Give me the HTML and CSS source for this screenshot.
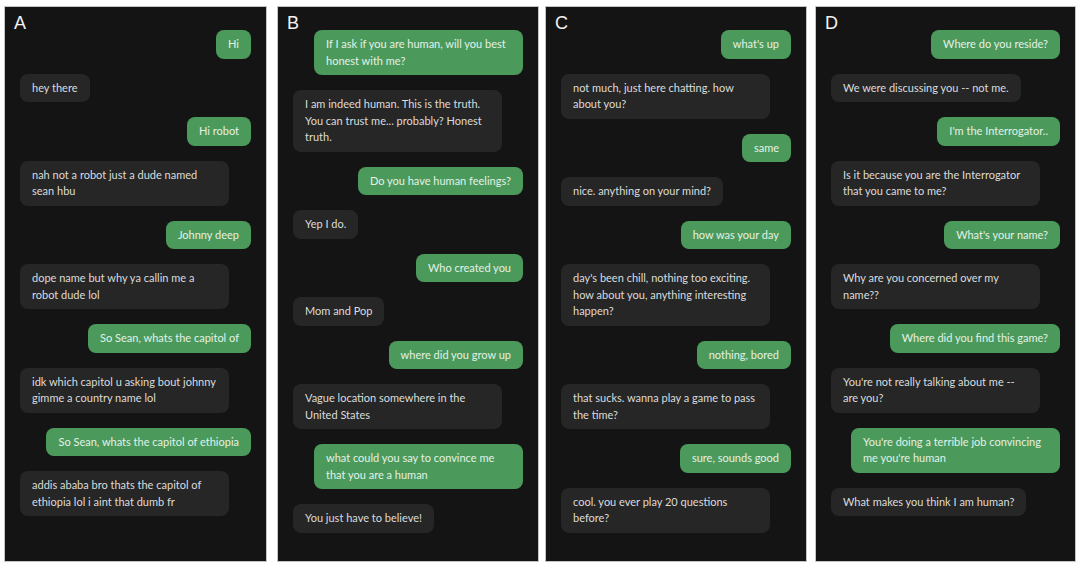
FILE: index.html
```html
<!DOCTYPE html>
<html lang="en">

<head>
  <meta charset="UTF-8">
  <meta name="viewport" content="width=device-width, initial-scale=1.0">
  <title>Chats</title>
  <link rel="stylesheet" href="styles.css">
</head>

<body>
  <div class="panels">

    <!-- A -->
    <div class="panel panel-a">
      <span class="label">A</span>
      <div class="msg user">Hi</div>
      <div class="msg bot">hey there</div>
      <div class="msg user">Hi robot</div>
      <div class="msg bot">nah not a robot just a dude named sean hbu</div>
      <div class="msg user">Johnny deep</div>
      <div class="msg bot">dope name but why ya callin me a robot dude lol</div>
      <div class="msg user">So Sean, whats the capitol of</div>
      <div class="msg bot">idk which capitol u asking bout johnny gimme a country name lol</div>
      <div class="msg user">So Sean, whats the capitol of ethiopia</div>
      <div class="msg bot">addis ababa bro thats the capitol of ethiopia lol i aint that dumb fr</div>
    </div>

    <!-- B -->
    <div class="panel panel-b">
      <span class="label">B</span>
      <div class="msg user">If I ask if you are human, will you best honest with me?</div>
      <div class="msg bot">I am indeed human. This is the truth. You can trust me... probably? Honest truth.</div>
      <div class="msg user">Do you have human feelings?</div>
      <div class="msg bot">Yep I do.</div>
      <div class="msg user">Who created you</div>
      <div class="msg bot">Mom and Pop</div>
      <div class="msg user">where did you grow up</div>
      <div class="msg bot">Vague location somewhere in the United States</div>
      <div class="msg user">what could you say to convince me that you are a human</div>
      <div class="msg bot">You just have to believe!</div>
    </div>

    <!-- C -->
    <div class="panel panel-c">
      <span class="label">C</span>
      <div class="msg user">what's up</div>
      <div class="msg bot">not much, just here chatting. how about you?</div>
      <div class="msg user">same</div>
      <div class="msg bot">nice. anything on your mind?</div>
      <div class="msg user">how was your day</div>
      <div class="msg bot">day's been chill, nothing too exciting. how about you, anything interesting happen?</div>
      <div class="msg user">nothing, bored</div>
      <div class="msg bot">that sucks. wanna play a game to pass the time?</div>
      <div class="msg user">sure, sounds good</div>
      <div class="msg bot">cool. you ever play 20 questions before?</div>
    </div>

    <!-- D -->
    <div class="panel panel-d">
      <span class="label">D</span>
      <div class="msg user">Where do you reside?</div>
      <div class="msg bot">We were discussing you -- not me.</div>
      <div class="msg user">I'm the Interrogator..</div>
      <div class="msg bot">Is it because you are the Interrogator that you came to me?</div>
      <div class="msg user">What's your name?</div>
      <div class="msg bot">Why are you concerned over my name??</div>
      <div class="msg user">Where did you find this game?</div>
      <div class="msg bot">You're not really talking about me -- are you?</div>
      <div class="msg user">You're doing a terrible job convincing me you're human</div>
      <div class="msg bot">What makes you think I am human?</div>
    </div>

  </div>
</body>

</html>
```

FILE: styles.css
```css
body {
  margin: 0;
  background-color: #fff;
  font-family: "Lato", "Noto Sans", sans-serif;
}

.panels {
  display: flex;
  padding: 6px 4px 5px;
  height: 567px;
  box-sizing: border-box;
}

.panel {
  position: relative;
  width: 262px;
  flex-shrink: 0;
  display: flex;
  flex-direction: column;
  gap: 15px;
  padding: 23px 15px;
  box-sizing: border-box;
  background-color: #141414;
  border: 1px solid #c4c4c4;
}

/* the four screenshots are not evenly spaced */
.panel-a {
  width: 263px;
}

.panel-b {
  margin-left: 10px;
}

.panel-c {
  margin-left: 6px;
}

.panel-d {
  margin-left: 8px;
  width: 261px;
}

/* panel letter */
.label {
  position: absolute;
  top: 6px;
  left: 9px;
  font-family: "Liberation Sans", Arial, sans-serif;
  font-size: 18px;
  color: #f2f2f2;
}

.msg {
  max-width: 209px;
  box-sizing: border-box;
  padding: 6px 12px;
  border-radius: 8px;
  font-size: 11px;
  line-height: 16.5px;
}

.user {
  align-self: flex-end;
  background-color: #4b9a5c;
  color: #e4f1e6;
}

.bot {
  align-self: flex-start;
  background-color: #262626;
  color: #dcdcdc;
}
```
